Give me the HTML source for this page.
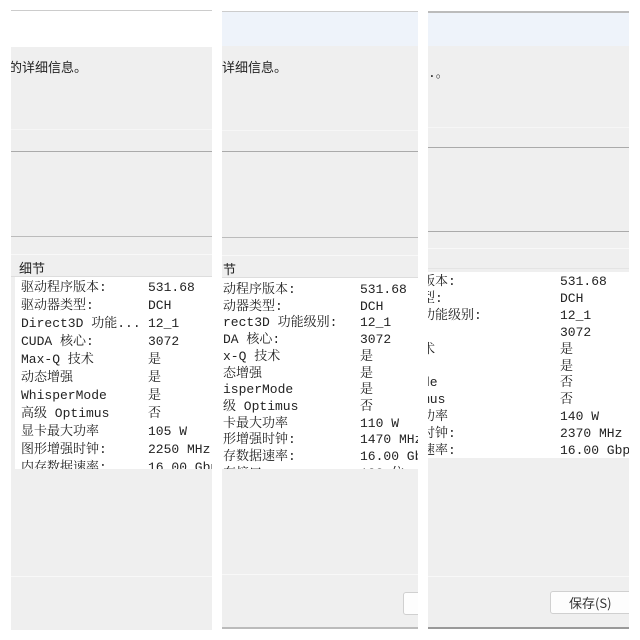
<!DOCTYPE html><html><head><meta charset="utf-8"><style>
*{margin:0;padding:0;box-sizing:border-box}
body{width:640px;height:640px;background:#fff;position:relative;overflow:hidden;font-family:"Liberation Mono","Noto Serif CJK SC",monospace;color:#222}
.p{position:absolute;overflow:hidden;background:#efefef}
.a{position:absolute}
.l{position:absolute;left:0;right:0;height:1px}
.row{position:absolute;white-space:nowrap;font-size:13px;line-height:16px}
.cj{font-family:"Noto Sans CJK SC",sans-serif}
</style></head><body>
<!-- panel 1 -->
<div class="p" style="left:11px;top:10px;width:201px;height:620px">
 <div class="a" style="left:0;top:0;width:100%;height:1px;background:#ccc"></div>
 <div class="a" style="left:0;top:1px;width:100%;height:36px;background:#fff"></div>
 <div class="a cj" style="left:-2px;top:49px;font-size:13px;line-height:16px">的详细信息。</div>
 <div class="l" style="top:119px;background:#f6f6f6"></div>
 <div class="l" style="top:141px;background:#aaa"></div>
 <div class="l" style="top:226px;background:#bbb"></div>
 <div class="l" style="top:244px;background:#f8f8f8"></div>
 <div class="a cj" style="left:8px;top:248px;font-size:13px">细节</div>
 <div class="l" style="top:266px;background:#ddd"></div>
 <div class="a" style="left:4px;top:267px;right:0;height:192px;background:#fff"></div>
 <div class="a" style="left:10px;top:270px;width:200px;height:189px;overflow:hidden;font-size:13.5px">
  <div class="row" style="top:0">驱动程序版本:</div><div class="row" style="left:127px;top:0">531.68</div>
  <div class="row" style="top:18px">驱动器类型:</div><div class="row" style="left:127px;top:18px">DCH</div>
  <div class="row" style="top:36px">Direct3D 功能...</div><div class="row" style="left:127px;top:36px">12_1</div>
  <div class="row" style="top:54px">CUDA 核心:</div><div class="row" style="left:127px;top:54px">3072</div>
  <div class="row" style="top:72px">Max-Q  技术</div><div class="row" style="left:127px;top:72px">是</div>
  <div class="row" style="top:90px">动态增强</div><div class="row" style="left:127px;top:90px">是</div>
  <div class="row" style="top:108px">WhisperMode</div><div class="row" style="left:127px;top:108px">是</div>
  <div class="row" style="top:126px">高级 Optimus</div><div class="row" style="left:127px;top:126px">否</div>
  <div class="row" style="top:144px">显卡最大功率</div><div class="row" style="left:127px;top:144px">105 W</div>
  <div class="row" style="top:162px">图形增强时钟:</div><div class="row" style="left:127px;top:162px">2250 MHz</div>
  <div class="row" style="top:180px">内存数据速率:</div><div class="row" style="left:127px;top:180px">16.00 Gbps</div>
 </div>
 <div class="l" style="top:566px;background:#f8f8f8"></div>
</div>
<!-- panel 2 -->
<div class="p" style="left:222px;top:11px;width:196px;height:618px">
 <div class="a" style="left:0;top:0;width:100%;height:1px;background:#ccc"></div>
 <div class="a" style="left:0;top:1px;width:100%;height:34px;background:#eef3fa"></div>
 <div class="a cj" style="left:0;top:48px;font-size:13px;line-height:16px">详细信息。</div>
 <div class="l" style="top:119px;background:#f6f6f6"></div>
 <div class="l" style="top:140px;background:#aaa"></div>
 <div class="l" style="top:226px;background:#bbb"></div>
 <div class="l" style="top:244px;background:#f8f8f8"></div>
 <div class="a cj" style="left:1px;top:248px;font-size:13px">节</div>
 <div class="l" style="top:266px;background:#ddd"></div>
 <div class="a" style="left:0;top:267px;right:0;height:191px;background:#fff"></div>
 <div class="a" style="left:1px;top:271px;width:200px;height:187px;overflow:hidden">
  <div class="row" style="top:0">动程序版本:</div><div class="row" style="left:137px;top:0">531.68</div>
  <div class="row" style="top:16.7px">动器类型:</div><div class="row" style="left:137px;top:16.7px">DCH</div>
  <div class="row" style="top:33.4px">rect3D 功能级别:</div><div class="row" style="left:137px;top:33.4px">12_1</div>
  <div class="row" style="top:50.1px">DA 核心:</div><div class="row" style="left:137px;top:50.1px">3072</div>
  <div class="row" style="top:66.8px">x-Q  技术</div><div class="row" style="left:137px;top:66.8px">是</div>
  <div class="row" style="top:83.5px">态增强</div><div class="row" style="left:137px;top:83.5px">是</div>
  <div class="row" style="top:100.2px">isperMode</div><div class="row" style="left:137px;top:100.2px">是</div>
  <div class="row" style="top:116.9px">级 Optimus</div><div class="row" style="left:137px;top:116.9px">否</div>
  <div class="row" style="top:133.6px">卡最大功率</div><div class="row" style="left:137px;top:133.6px">110 W</div>
  <div class="row" style="top:150.3px">形增强时钟:</div><div class="row" style="left:137px;top:150.3px">1470 MHz</div>
  <div class="row" style="top:167px">存数据速率:</div><div class="row" style="left:137px;top:167px">16.00 Gbps</div>
  <div class="row" style="top:183.7px">存接口</div><div class="row" style="left:137px;top:183.7px">128 位</div>
 </div>
 <div class="l" style="top:563px;background:#f8f8f8"></div>
 <div class="a" style="left:181px;top:581px;width:40px;height:23px;background:#fdfdfd;border:1px solid #d0d0d0;border-radius:3px"></div>
 <div class="l" style="top:616px;height:2px;background:#bbb"></div>
</div>
<!-- panel 3 -->
<div class="p" style="left:428px;top:11px;width:201px;height:618px">
 <div class="a" style="left:0;top:0;width:100%;height:2px;background:#bbb"></div>
 <div class="a" style="left:0;top:2px;width:100%;height:33px;background:#eef3fa"></div>
 <div class="a" style="left:0;top:55px;font-size:13px;line-height:16px">.。</div>
 <div class="l" style="top:116px;background:#f6f6f6"></div>
 <div class="l" style="top:136px;background:#aaa"></div>
 <div class="l" style="top:220px;background:#aaa"></div>
 <div class="l" style="top:237px;background:#f8f8f8"></div>
 <div class="l" style="top:257px;background:#e4e4e4"></div>
 <div class="a" style="left:0;top:261px;right:0;height:186px;background:#fff"></div>
 <div class="a" style="left:-6px;top:263px;width:210px;height:184px;overflow:hidden">
  <div class="row" style="top:0">版本:</div><div class="row" style="left:138px;top:0">531.68</div>
  <div class="row" style="top:16.9px">型:</div><div class="row" style="left:138px;top:16.9px">DCH</div>
  <div class="row" style="top:33.8px">功能级别:</div><div class="row" style="left:138px;top:33.8px">12_1</div>
  <div class="row" style="top:50.7px"> :</div><div class="row" style="left:138px;top:50.7px">3072</div>
  <div class="row" style="top:67.6px">术</div><div class="row" style="left:138px;top:67.6px">是</div>
  <div class="row" style="left:138px;top:84.5px">是</div>
  <div class="row" style="top:101.4px">de</div><div class="row" style="left:138px;top:101.4px">否</div>
  <div class="row" style="top:118.3px">mus</div><div class="row" style="left:138px;top:118.3px">否</div>
  <div class="row" style="top:135.2px">功率</div><div class="row" style="left:138px;top:135.2px">140 W</div>
  <div class="row" style="top:152.1px">时钟:</div><div class="row" style="left:138px;top:152.1px">2370 MHz</div>
  <div class="row" style="top:169px">速率:</div><div class="row" style="left:138px;top:169px">16.00 Gbps</div>
 </div>
 <div class="l" style="top:565px;background:#f8f8f8"></div>
 <div class="a cj" style="left:122px;top:580px;width:82px;height:23px;background:#fdfdfd;border:1px solid #d0d0d0;border-radius:3px;font-size:13px;line-height:21px;padding-left:18px;color:#333">保存(S)</div>
 <div class="l" style="top:616px;height:2px;background:#999"></div>
</div>
</body></html>
